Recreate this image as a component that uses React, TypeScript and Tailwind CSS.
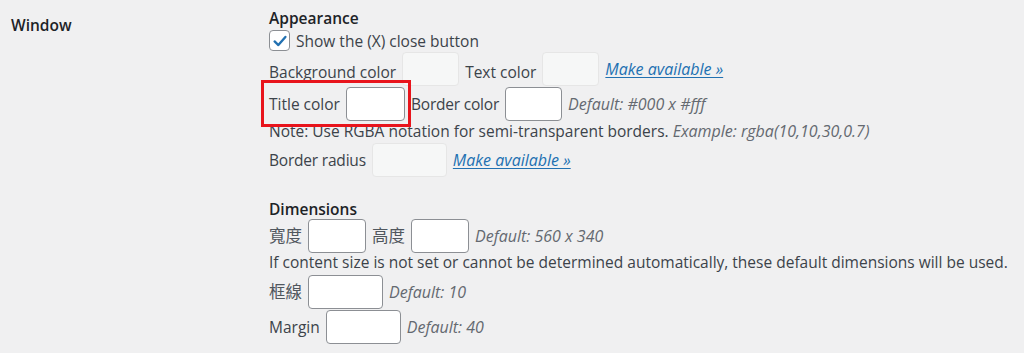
import { FC } from 'react'

const font = { fontFamily: '"Open Sans", "Noto Sans CJK TC", sans-serif' }

const Box: FC<{ w: string; disabled?: boolean }> = ({ w, disabled }) => (
  <input
    type="text"
    disabled={disabled}
    className={
      disabled
        ? `${w} h-[34px] rounded-[4px] border border-[#e6e6e6] bg-[#f6f7f7] mx-[6px]`
        : `${w} h-[34px] rounded-[4px] border border-[#8c8f94] bg-white mx-[6px]`
    }
  />
)

const Link: FC<{ children: string }> = ({ children }) => (
  <a href="#" className="italic text-[16px] text-[#2271b1] underline underline-offset-2">
    {children}
  </a>
)

const Hint: FC<{ children: React.ReactNode }> = ({ children }) => (
  <span className="italic text-[16px] text-[#646970]">{children}</span>
)

export default function App() {
  return (
    <div className="w-[1024px] h-[353px] bg-[#f0f0f1] flex text-[15.5px] text-[#3c434a]" style={font}>
      <div className="w-[258px] pl-[11px] pt-[14px] font-semibold text-[#1d2327]">Window</div>
      <div className="flex-1 pl-[11px] pt-[8px] leading-[20px]">
        <div className="font-semibold text-[#1d2327]">Appearance</div>
        <label className="flex items-center h-[23px] mt-[1px]">
          <span className="w-[21px] h-[21px] rounded-[4px] border border-[#8c8f94] bg-white flex items-center justify-center mr-[6px]">
            <svg viewBox="0 0 20 20" className="w-[18px] h-[18px]">
              <path d="M4 10.5 L8.2 14.5 L16 5.5" fill="none" stroke="#2271b1" strokeWidth="2.6" strokeLinecap="round" strokeLinejoin="round" />
            </svg>
          </span>
          Show the (X) close button
        </label>
        <div className="flex items-center h-[34px]">
          <span className="mt-[5px]">Background color</span>
          <Box w="w-[57px]" disabled />
          <span className="mt-[5px]">Text color</span>
          <Box w="w-[57px]" disabled />
          <Link>Make available »</Link>
        </div>
        <div className="flex items-center h-[35px]">
          <span className="relative flex items-center">
            <span>Title color</span>
            <Box w="w-[59px]" />
            <span className="absolute -left-[8px] right-0 -top-[7px] -bottom-[6px] border-[3px] border-[#e8141c] pointer-events-none" />
          </span>
          <span className="tracking-[-0.2px]">Border color</span>
          <Box w="w-[57px]" />
          <Hint>Default: #000 x #fff</Hint>
        </div>
        <div className="h-[20px]">
          Note: Use RGBA notation for semi-transparent borders. <Hint>Example: rgba(10,10,30,0.7)</Hint>
        </div>
        <div className="flex items-center h-[35px] mt-[1px]">
          <span className="tracking-[-0.2px]">Border radius</span>
          <Box w="w-[75px]" disabled />
          <Link>Make available »</Link>
        </div>
        <div className="font-semibold text-[#1d2327] mt-[22px]">Dimensions</div>
        <div className="flex items-center h-[33px]">
          <span className="text-[16.5px] text-[#50575e]">寬度</span>
          <Box w="w-[58px]" />
          <span className="text-[16.5px] text-[#50575e]">高度</span>
          <Box w="w-[58px]" />
          <Hint>Default: 560 x 340</Hint>
        </div>
        <div className="h-[22px]">
          If content size is not set or cannot be determined automatically, these default dimensions will be used.
        </div>
        <div className="flex items-center h-[35px]">
          <span className="text-[16.5px] text-[#50575e]">框線</span>
          <Box w="w-[75px]" />
          <Hint>Default: 10</Hint>
        </div>
        <div className="flex items-center h-[35px]">
          <span>Margin</span>
          <Box w="w-[75px]" />
          <Hint>Default: 40</Hint>
        </div>
      </div>
    </div>
  )
}
